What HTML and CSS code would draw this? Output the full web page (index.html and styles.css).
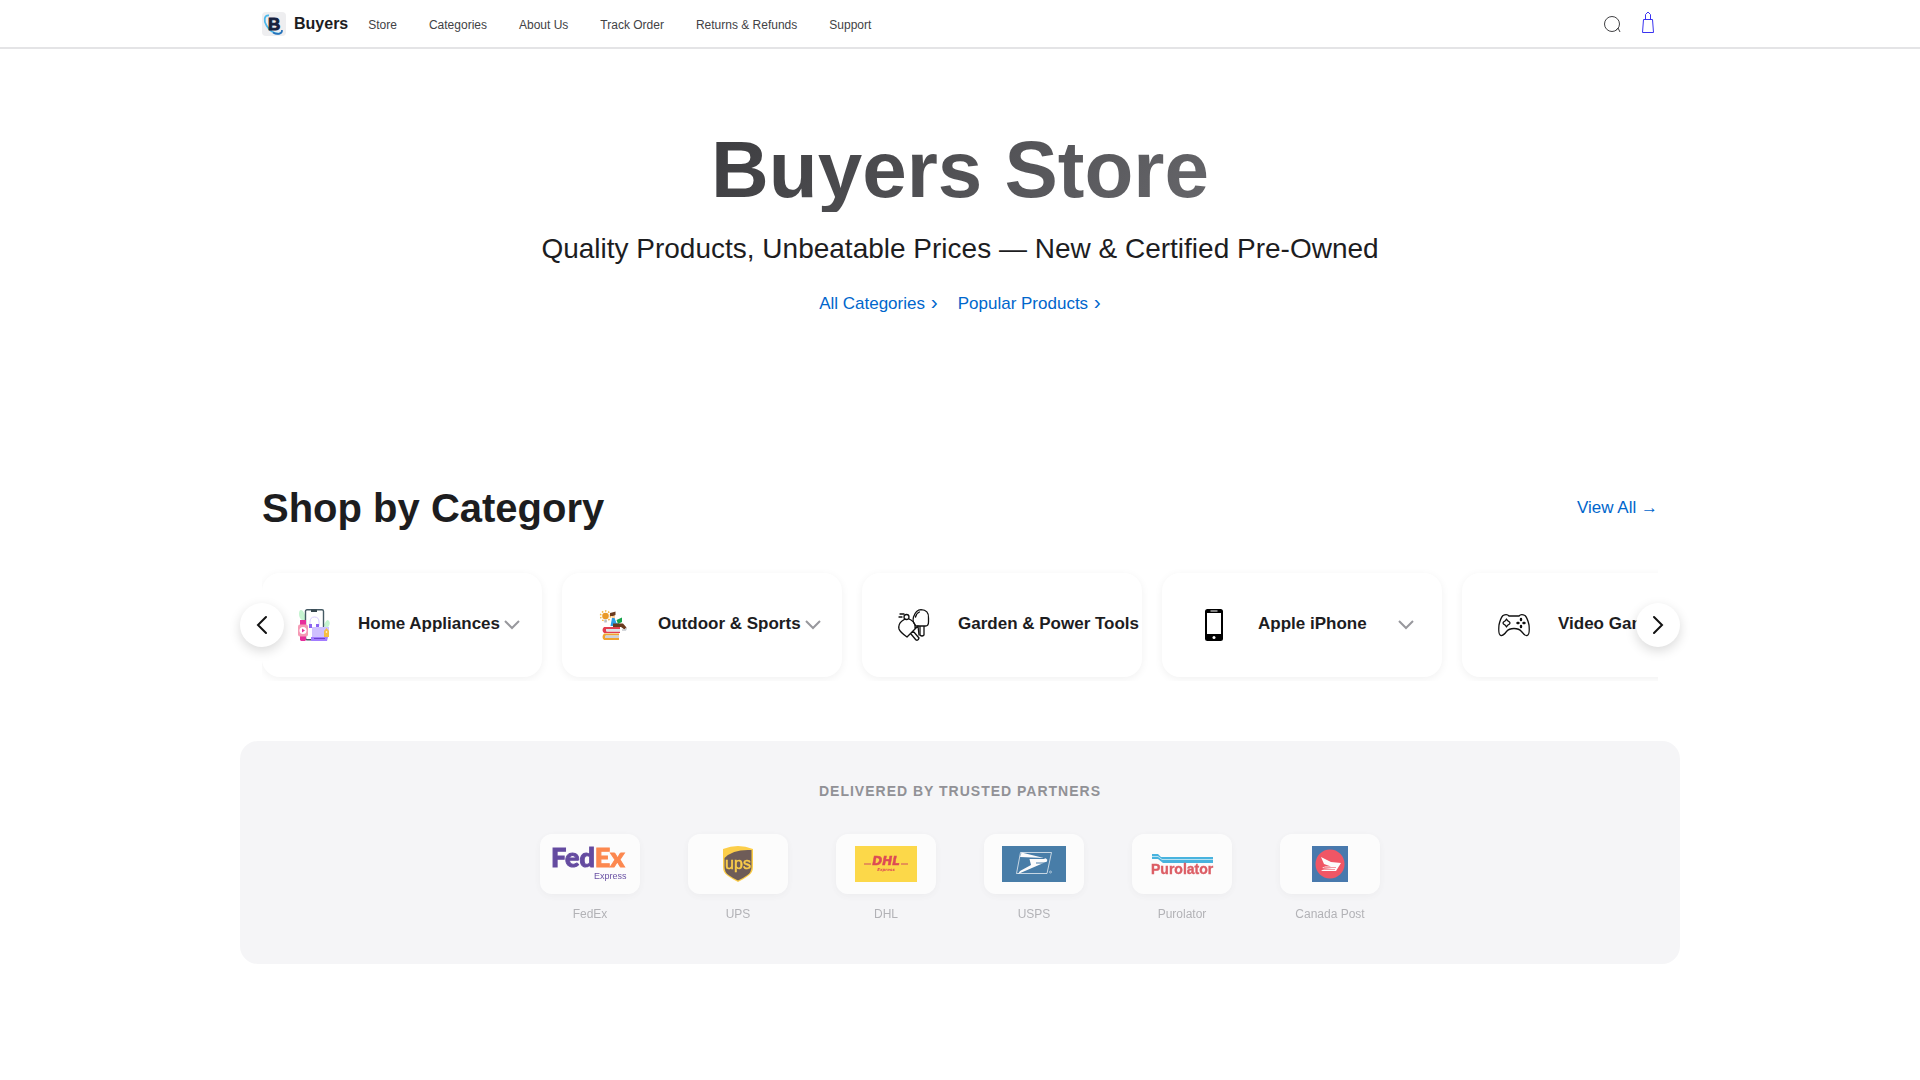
FILE: index.html
```html
<!DOCTYPE html>
<html lang="en">
<head>
<meta charset="utf-8">
<meta name="viewport" content="width=device-width, initial-scale=1">
<title>Buyers Store</title>
<link rel="stylesheet" href="styles.css">
</head>
<body>
<header class="site-header">
  <div class="header-inner">
    <a class="brand" href="#">
      <svg class="brand-logo" viewBox="0 0 24 24" aria-hidden="true">
        <rect width="24" height="24" rx="4" fill="#eeeef0"/>
        <path d="M7 3.500C2 3 1.500 9 4.500 13.500c3 5 8 8.500 13.500 8" fill="none" stroke="#4db8ea" stroke-width="1.800"/>
        <text x="6" y="18" font-size="17" font-weight="700" fill="#16213f" stroke="#16213f">B</text>
        <path d="M11 20.500c4 2.500 9.500 1.500 9-2.500" fill="none" stroke="#2672ba" stroke-width="1.600"/>
      </svg>
      <span>Buyers</span>
    </a>
    <nav class="main-nav" aria-label="Main">
      <a href="#">Store</a>
      <a href="#">Categories</a>
      <a href="#">About Us</a>
      <a href="#">Track Order</a>
      <a href="#">Returns &amp; Refunds</a>
      <a href="#">Support</a>
    </nav>
    <div class="header-tools">
      <button class="search" type="button" aria-label="Search">
        <svg width="20" height="24" viewBox="0 0 20 24"><circle cx="10" cy="12" r="7.500"/><path d="m14 18 2-2 2 4"/></svg>
      </button>
      <a class="bag" href="#" aria-label="Shopping bag">
        <svg width="20" height="24" viewBox="0 0 20 24"><path d="M5.500 7.500h9l1 13h-11zM7.500 7.500v-5L10 0l2.500 2.500v5"/></svg>
      </a>
    </div>
  </div>
</header>

<main>
  <section class="hero">
    <h1>Buyers Store</h1>
    <p>Quality Products, Unbeatable Prices — New &amp; Certified Pre-Owned</p>
    <div class="hero-links">
      <a href="#categories">All Categories <span class="angle">›</span></a>
      <a href="#popular">Popular Products <span class="angle">›</span></a>
    </div>
  </section>

  <section class="categories" id="categories">
    <div class="section-head">
      <h2>Shop by Category</h2>
      <a href="#">View All →</a>
    </div>
    <div class="carousel">
      <div class="track">
        <button class="category" type="button">
          <span class="category-icon">
            <svg viewBox="0 0 32 32">
              <path d="M1 5q0-4 2-4t4 5v5H4Q1 9 1 5zM26 16q2-5 4-5 3 2 1 6l-3 3z" fill="#c5f4d0"/>
              <rect x="7.500" y=".7" width="18" height="30" rx="1.500" fill="#fff" stroke="#455a64" stroke-width="1.400"/>
              <path d="M13 .5h6V3h-6z" fill="#37474f"/>
              <path d="M12 17v-4q0-5 4.500-5t4.500 5v4" fill="none" stroke="#d9ccff"/>
              <path d="M11 15h3v4h-3zM18 15h3v4h-3z" fill="#8b63f2"/>
              <path d="M14 18h17v10H14z" fill="#cfc0ff"/><path d="M13 28h17l-1 4H13z" fill="#a27cff"/><path d="M16 29h11v1H16z" fill="#6c45cc"/>
              <path d="m28.500 19 2.500 3v6h-5v-6z" fill="#f6bf43"/><circle cx="28.500" cy="23" r=".8" fill="#fff"/>
              <path d="M2 11h6v5H2zM2 27h6v4l-1 1H3l-1-1z" fill="#e62e9b"/><rect y="15.500" width="10" height="12" rx="2" fill="#f59ab5"/><circle cx="5" cy="21.500" r="3.500" fill="#fff"/><path d="M4 19.500v4l3-2z" fill="#e62e9b"/>
            </svg>
          </span>
          <span class="category-name">Home Appliances</span>
          <svg class="chevron" viewBox="0 0 24 24"><path d="m5 8 7 7 7-7"/></svg>
        </button>
        <button class="category" type="button">
          <span class="category-icon">
            <svg viewBox="0 0 32 32">
              <circle cx="7.500" cy="7" r="5" fill="none" stroke="#f5b840" stroke-width="1.500" stroke-dasharray="1.500 1.700"/>
              <circle cx="7.500" cy="7" r="3.300" fill="#e99a27"/><path d="M6.300 10.500h2.400v3H6.300z" fill="#b8bec9"/>
              <path d="M13 5h4v5h-3z" fill="#ffd0a0"/><path d="M12 7V4l4-1 1.500-.5V6L15 7z" fill="#6b3a1e"/>
              <path d="M14 9h2.500l2 5 3 1-1 2h-8z" fill="#2b9fe6"/><path d="m18.500 11 5.500-2.500V13l-4 2z" fill="#15a34a"/>
              <path d="M15 14.500h10l3.500 4-2 2-3.500-2.500h-8z" fill="#6b3a1e"/><path d="M24 21h3.500l1-2" fill="none" stroke="#c6cad0" stroke-width="1.500"/>
              <path d="M6 18h16v2H9v2.500h13V24H6q-3-3 0-6z" fill="#e33e50"/><path d="M8 20h14v2.500H8z" fill="#dfe3e8"/>
              <path d="M6 24.500h15v2H8V29h13v2H6q-3-3 0-6.500z" fill="#f0a22e"/><path d="M7 26.500h14V29H7z" fill="#ccd1db"/>
            </svg>
          </span>
          <span class="category-name">Outdoor &amp; Sports</span>
          <svg class="chevron" viewBox="0 0 24 24"><path d="m5 8 7 7 7-7"/></svg>
        </button>
        <button class="category" type="button">
          <span class="category-icon">
            <svg viewBox="0 0 32 32" class="line-icon">
              <path d="M18 17q-4-4-2.500-9Q18 .7 23 .7 31 1 30.500 9v4q0 4-3 4zM17.500 8q1-4 4-5M22 17v9q2 2 4 0v-9"/>
              <path d="m7 10-3 2q-4 3-3 8 1 3 8 8l8-8q1-6-4-9l-2-1M13 25l5 6q2 1 3-2l-6-7M17 20l3-3 1 9"/>
              <circle cx="8.500" cy="8" r="2.500"/><path d="M2 5h4M1 8h3"/>
            </svg>
          </span>
          <span class="category-name">Garden &amp; Power Tools</span>
          <svg class="chevron" viewBox="0 0 24 24"><path d="m5 8 7 7 7-7"/></svg>
        </button>
        <button class="category" type="button">
          <span class="category-icon">
            <svg viewBox="0 0 32 32">
              <rect x="7" width="18" height="32" rx="2.500"/><path d="M9 4h14v21H9z" fill="#fff"/><path d="M12.500 2h7" stroke="#aaa" stroke-width="1.500"/><circle cx="16" cy="28.500" r="1.500" fill="#fff"/>
            </svg>
          </span>
          <span class="category-name">Apple iPhone</span>
          <svg class="chevron" viewBox="0 0 24 24"><path d="m5 8 7 7 7-7"/></svg>
        </button>
        <button class="category" type="button">
          <span class="category-icon">
            <svg viewBox="0 0 32 32" class="line-icon">
              <path d="M5 6.500q4-2 6 .5h10q2-2.500 6-.5 2.500 2.500 4 9.500 1 10-2 10.500-2 .5-5.500-4-2.500-3-7.500-3t-7.500 3q-3.500 4.500-5.500 4Q0 26 1 16 2.500 9 5 6.500z"/>
              <path d="m8.500 10 1.200 1.800 1.800 1.200.5 1-.5 1-1.800 1.200L8.500 18l-1.200-1.800L5.500 15 5 14l.5-1 1.800-1.200z"/>
              <path d="M23 10v1M23 17v1M19.500 14h1M25.500 14h1" stroke-width="2.400"/>
            </svg>
          </span>
          <span class="category-name">Video Games</span>
          <svg class="chevron" viewBox="0 0 24 24"><path d="m5 8 7 7 7-7"/></svg>
        </button>
      </div>
      <button class="arrow arrow-prev" type="button" aria-label="Previous"><svg viewBox="0 0 24 24"><path d="m16 4-8 8 8 8"/></svg></button>
      <button class="arrow arrow-next" type="button" aria-label="Next"><svg viewBox="0 0 24 24"><path d="m8 4 8 8-8 8"/></svg></button>
    </div>
  </section>

  <section class="partners">
    <h3>Delivered by Trusted Partners</h3>
    <ul>
      <li>
        <span class="partner-card">
          <svg width="76" height="36" viewBox="0 0 76 36" aria-hidden="true">
            <g class="logo-heavy" font-size="27"><text x="-1" y="21" fill="#28047c" stroke="#28047c">Fed<tspan fill="#ff5a09" stroke="#ff5a09">Ex</tspan></text></g>
            <text x="42" y="33" font-size="9" fill="#28047c">Express</text>
          </svg>
        </span>
        <span>FedEx</span>
      </li>
      <li>
        <span class="partner-card">
          <svg width="30" height="36" viewBox="0 0 30 36" aria-hidden="true">
            <path d="M0 3q15-6 30 0v18q0 6-5 9-4 3-10 6-6-3-10-6-5-3-5-9z" fill="#ffbe00"/>
            <path d="M1.500 12Q10 3 28.500 4v17q0 5-4 8-4 3-9.500 5.500Q9.500 32 5.500 29q-4-3-4-8z" fill="#351c15"/>
            <text x="15" y="23" font-size="16" text-anchor="middle" fill="#ffbe00" stroke="#ffbe00" stroke-width=".5">ups</text>
          </svg>
        </span>
        <span>UPS</span>
      </li>
      <li>
        <span class="partner-card">
          <svg width="62" height="36" viewBox="0 0 62 36" aria-hidden="true">
            <path d="M0 0h62v36H0z" fill="#fc0"/>
            <path d="M9 17h7v2H9zM46 17h7v2h-7z" fill="#e06a10"/>
            <g class="logo-wide" fill="#d40511" text-anchor="middle"><text x="31" y="19" font-size="12" stroke="#d40511" stroke-width=".5">DHL</text><text x="31" y="25" font-size="4">Express</text></g>
          </svg>
        </span>
        <span>DHL</span>
      </li>
      <li>
        <span class="partner-card">
          <svg width="64" height="36" viewBox="0 0 64 36" aria-hidden="true">
            <path d="M0 0h64v36H0z" fill="#004b87"/>
            <path d="M18.500 6.500h31l-4.500 21H14.500z" fill="none" stroke="#fff" stroke-opacity=".7"/>
            <path d="M19.500 6.500 44 12.500q2 1 1 3L16 28l2-3 11-6-1.500-6H43l-1-1-24-1z" fill="#fff"/>
            <path d="M34 17h10" stroke="#004b87"/>
            <circle cx="48.500" cy="26" r="1" fill="none" stroke="#fff" stroke-width=".5"/>
          </svg>
        </span>
        <span>USPS</span>
      </li>
      <li>
        <span class="partner-card">
          <svg width="68" height="36" viewBox="0 0 68 36" aria-hidden="true">
            <path d="M4 8h6l3 3h52v6H15l-5-4H4z" fill="#0098d4"/><path d="M4 10.500h6l4 3h51" fill="none" stroke="#9fdaf2"/>
            <text class="logo-bold" x="3" y="28" font-size="14" fill="#d21e28" stroke="#d21e28" stroke-width=".4">Purolator</text>
          </svg>
        </span>
        <span>Purolator</span>
      </li>
      <li>
        <span class="partner-card">
          <svg width="36" height="36" viewBox="0 0 36 36" aria-hidden="true">
            <path d="M0 0h36v36H0z" fill="#00468f"/><circle cx="18" cy="18" r="14.500" fill="#ee1428"/>
            <path d="m9 11 10 5 10 1-5 8H9l3-2h8l-10-1 3-1.500h6L12 18z" fill="#fff"/><path d="M12 21.500h12M11 23.500h12" stroke="#ee1428" stroke-width=".6"/>
          </svg>
        </span>
        <span>Canada Post</span>
      </li>
    </ul>
  </section>
</main>
</body>
</html>
```
FILE: styles.css
```css
* { box-sizing: border-box; }
body { margin: 0; background: #fff; color: #1d1d1f; font-family: "Liberation Sans", Arial, sans-serif; font-size: 17px; line-height: 25px; }
h1, h2, h3, p, ul { margin: 0; padding: 0; }
a { color: #06c; text-decoration: none; }
button { border: 0; padding: 0; background: none; color: inherit; font: inherit; cursor: pointer; }
svg { display: block; flex: none; }

.site-header { border-bottom: 2px solid #e4e4e6; }
.header-inner, .hero, .categories { max-width: 1440px; margin: 0 auto; padding: 0 22px; }
.header-inner { display: flex; align-items: center; gap: 20px; height: 47px; }
.brand { display: flex; align-items: center; gap: 8px; color: #1d1d1f; font-size: 16px; font-weight: 700; }
.brand-logo { width: 24px; height: 24px; }
.main-nav { display: flex; gap: 32px; padding-top: 4px; }
.main-nav a { color: #424245; font-size: 12px; }
.header-tools { display: flex; gap: 16px; margin-left: auto; }
.header-tools svg { fill: none; stroke: currentColor; }
.search { color: #424245; }
.bag { color: #3a33f0; }

.hero { padding-top: 79px; text-align: center; }
.hero h1 { font-size: 80px; line-height: 84px; font-weight: 700; color: transparent; background: linear-gradient(135deg, #1d1d1f, #86868b); background-clip: text; -webkit-background-clip: text; }
.hero p { margin-top: 21px; font-size: 28px; line-height: 32px; }
.hero-links { display: flex; justify-content: center; gap: 20px; margin-top: 24px; }
.angle { margin-left: 1px; font-size: 21px; }

.categories { padding-top: 170px; }
.section-head { display: flex; align-items: center; justify-content: space-between; }
.section-head h2 { font-size: 40px; line-height: 44px; }
.section-head a { padding-bottom: 2px; }
.carousel { position: relative; margin-top: 39px; }
.track { display: flex; gap: 20px; padding: 4px 0; overflow: hidden; }
.category { display: flex; align-items: center; flex: 0 0 280px; height: 104px; padding: 24px; overflow: hidden; border-radius: 18px; background: #fff; box-shadow: 0 2px 8px rgba(0, 0, 0, .06); text-align: left; }
.category-icon { display: grid; place-items: center; flex: none; width: 56px; height: 56px; margin-right: 16px; }
.category-icon svg { width: 32px; height: 32px; }
.line-icon { overflow: visible; fill: none; stroke: #111; stroke-width: 1.3; stroke-linejoin: round; stroke-linecap: round; }
.category-name { flex: 1 0 auto; padding-bottom: 4px; font-weight: 700; white-space: nowrap; }
.chevron { width: 24px; height: 24px; fill: none; stroke: #98989d; stroke-width: 2; }
.arrow { position: absolute; top: 50%; display: grid; place-items: center; width: 44px; height: 44px; margin-top: -22px; border-radius: 50%; background: #fff; box-shadow: 0 4px 12px rgba(0, 0, 0, .15); }
.arrow svg { width: 24px; height: 24px; fill: none; stroke: #111; stroke-width: 2; stroke-linecap: round; }
.arrow-prev { left: -22px; }
.arrow-next { right: -22px; }

.partners { max-width: 1440px; margin: 60px auto 0; padding: 40px 22px; border-radius: 18px; background: #f5f5f7; text-align: center; }
.partners h3 { color: #919196; font-size: 14px; line-height: 21px; letter-spacing: 1px; text-transform: uppercase; }
.partners ul { display: flex; flex-wrap: wrap; justify-content: center; gap: 48px; margin-top: 32px; list-style: none; }
.partners li { display: flex; flex-direction: column; gap: 11px; padding-bottom: 1px; color: #96969b; font-size: 12px; line-height: 18px; opacity: .7; }
.partner-card { display: grid; place-items: center; width: 100px; height: 60px; border-radius: 12px; background: #fff; box-shadow: 0 2px 8px rgba(0, 0, 0, .06); }
.partner-card svg { overflow: visible; }
.logo-heavy { font-family: Lato, "Liberation Sans", sans-serif; font-weight: 900; }
.logo-wide { font-family: "DejaVu Sans", sans-serif; font-weight: 700; font-style: italic; }
.logo-bold { font-weight: 700; }
```
